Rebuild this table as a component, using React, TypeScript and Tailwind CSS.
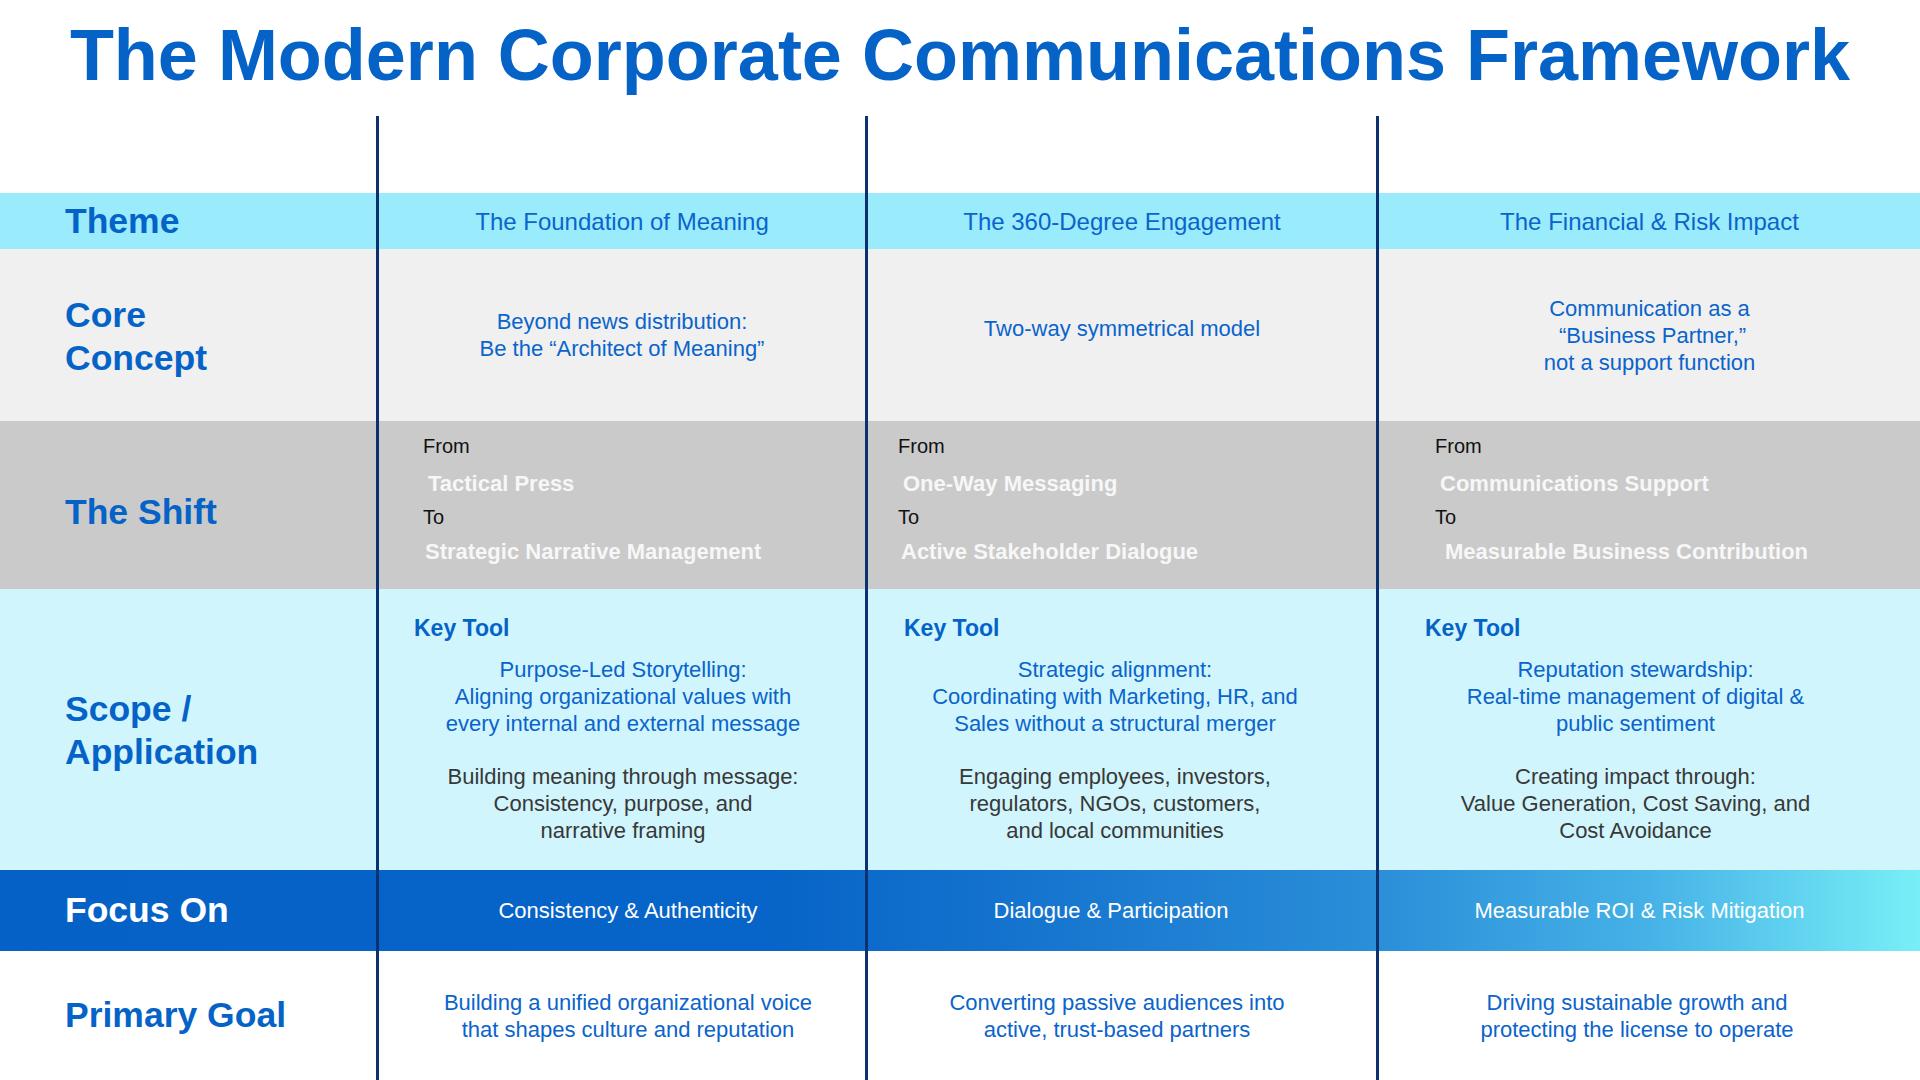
import React from "react";

const COLS = "grid grid-cols-[376px_489px_511px_1fr]";
const LINE = "border-l-[3px] border-[#0b3170]";
const LABEL = "pl-[65px] text-[35.5px] font-bold text-[#0563c8] leading-[43px]";
const BODY = "text-[22px] leading-[27px] text-[#0a64cb] text-center";

function Shift({ pl, from, to, i1, i2 }: { pl: string; from: string; to: string; i1: string; i2: string }) {
  return (
    <div className={`${LINE} ${pl} pt-[8px] flex flex-col`}>
      <div className="text-[20px] leading-[35px] text-[#111111]">From</div>
      <div className={`${i1} pt-[2px] text-[22px] leading-[35px] font-bold text-[#f7f7f7]`}>{from}</div>
      <div className="text-[20px] leading-[33px] text-[#111111]">To</div>
      <div className={`${i2} text-[22px] leading-[35px] font-bold text-[#f7f7f7]`}>{to}</div>
    </div>
  );
}

function Scope({ pl, shift, blue, gray }: { pl: string; shift: string; blue: string[]; gray: string[] }) {
  return (
    <div className={`${LINE} pt-[25px] flex flex-col`}>
      <div className={`${pl} text-[23px] leading-[28px] font-bold text-[#0563c8]`}>Key Tool</div>
      <div className={`${shift} mt-[14px] ${BODY}`}>
        {blue.map((b) => (
          <div key={b}>{b}</div>
        ))}
      </div>
      <div className={`${shift} mt-[26px] text-[22px] leading-[27px] text-[#383838] text-center`}>
        {gray.map((g) => (
          <div key={g}>{g}</div>
        ))}
      </div>
    </div>
  );
}

export default function App() {
  return (
    <div className="w-[1920px] h-[1080px] bg-white overflow-hidden flex flex-col font-['Liberation_Sans',Arial,sans-serif]">
      <h1 className="h-[116px] shrink-0 pt-[19px] text-center text-[72px] leading-[72px] font-bold text-[#0563c8]">
        The Modern Corporate Communications Framework
      </h1>

      {/* spacer row with lines */}
      <div className={`${COLS} h-[77px] shrink-0`}>
        <div />
        <div className={LINE} />
        <div className={LINE} />
        <div className={LINE} />
      </div>

      {/* Theme */}
      <div className={`${COLS} h-[56px] shrink-0 bg-[#9aebfc]`}>
        <div className={`${LABEL} flex items-center leading-none pt-[1px]`}>Theme</div>
        <div className={`${LINE} flex items-center justify-center pt-[2px] text-[24px] text-[#0a64cb]`}>The Foundation of Meaning</div>
        <div className={`${LINE} flex items-center justify-center pt-[2px] text-[24px] text-[#0a64cb]`}>The 360-Degree Engagement</div>
        <div className={`${LINE} flex items-center justify-center pt-[2px] text-[24px] text-[#0a64cb]`}>The Financial &amp; Risk Impact</div>
      </div>

      {/* Core Concept */}
      <div className={`${COLS} h-[172px] shrink-0 bg-[#f0f0f0]`}>
        <div className={`${LABEL} flex flex-col justify-center pt-[3px]`}>
          <div>Core</div>
          <div>Concept</div>
        </div>
        <div className={`${LINE} flex flex-col items-center justify-center ${BODY}`}>
          <div>Beyond news distribution:</div>
          <div>Be the “Architect of Meaning”</div>
        </div>
        <div className={`${LINE} flex flex-col items-center justify-center pb-[13px] ${BODY}`}>
          <div>Two-way symmetrical model</div>
        </div>
        <div className={`${LINE} flex flex-col items-center justify-center ${BODY}`}>
          <div>Communication as a</div>
          <div>&nbsp;“Business Partner,”</div>
          <div>not a support function</div>
        </div>
      </div>

      {/* The Shift */}
      <div className={`${COLS} h-[168px] shrink-0 bg-[#cacaca]`}>
        <div className={`${LABEL} flex items-center pt-[14px]`}>The Shift</div>
        <Shift pl="pl-[44px]" i1="pl-[5px]" i2="pl-[2px]" from="Tactical Press" to="Strategic Narrative Management" />
        <Shift pl="pl-[30px]" i1="pl-[5px]" i2="pl-[3px]" from="One-Way Messaging" to="Active Stakeholder Dialogue" />
        <Shift pl="pl-[56px]" i1="pl-[5px]" i2="pl-[10px]" from="Communications Support" to="Measurable Business Contribution" />
      </div>

      {/* Scope / Application */}
      <div className={`${COLS} h-[281px] shrink-0 bg-[#d0f5fd]`}>
        <div className={`${LABEL} flex flex-col justify-center pt-[2px]`}>
          <div>Scope /</div>
          <div>Application</div>
        </div>
        <Scope
          pl="pl-[35px]"
          shift="pl-[2px]"
          blue={["Purpose-Led Storytelling:", "Aligning organizational values with", "every internal and external message"]}
          gray={["Building meaning through message:", "Consistency, purpose, and", "narrative framing"]}
        />
        <Scope
          pl="pl-[36px]"
          shift="pr-[14px]"
          blue={["Strategic alignment:", "Coordinating with Marketing, HR, and", "Sales without a structural merger"]}
          gray={["Engaging employees, investors,", "regulators, NGOs, customers,", "and local communities"]}
        />
        <Scope
          pl="pl-[46px]"
          shift="pr-[28px]"
          blue={["Reputation stewardship:", "Real-time management of digital &", "public sentiment"]}
          gray={["Creating impact through:", "Value Generation, Cost Saving, and", "Cost Avoidance"]}
        />
      </div>

      {/* Focus On */}
      <div className={`${COLS} h-[81px] shrink-0 bg-[linear-gradient(to_right,#0561c6_0%,#0764c8_40%,#1776cf_55%,#2b8fd9_72%,#46b2e7_86%,#78eff7_100%)]`}>
        <div className="pl-[65px] pt-[1px] flex items-center text-[35.5px] font-bold text-white leading-none">Focus On</div>
        <div className={`${LINE} pl-[12px] flex items-center justify-center text-[22px] text-white`}>Consistency &amp; Authenticity</div>
        <div className={`${LINE} pr-[22px] flex items-center justify-center text-[22px] text-white`}>Dialogue &amp; Participation</div>
        <div className={`${LINE} pr-[20px] flex items-center justify-center text-[22px] text-white`}>Measurable ROI &amp; Risk Mitigation</div>
      </div>

      {/* Primary Goal */}
      <div className={`${COLS} flex-1 bg-white`}>
        <div className={`${LABEL} flex items-center leading-none`}>Primary Goal</div>
        <div className={`${LINE} pl-[12px] flex flex-col items-center justify-center ${BODY}`}>
          <div>Building a unified organizational voice</div>
          <div>that shapes culture and reputation</div>
        </div>
        <div className={`${LINE} pr-[10px] flex flex-col items-center justify-center ${BODY}`}>
          <div>Converting passive audiences into</div>
          <div>active, trust-based partners</div>
        </div>
        <div className={`${LINE} pr-[25px] flex flex-col items-center justify-center ${BODY}`}>
          <div>Driving sustainable growth and</div>
          <div>protecting the license to operate</div>
        </div>
      </div>
    </div>
  );
}
